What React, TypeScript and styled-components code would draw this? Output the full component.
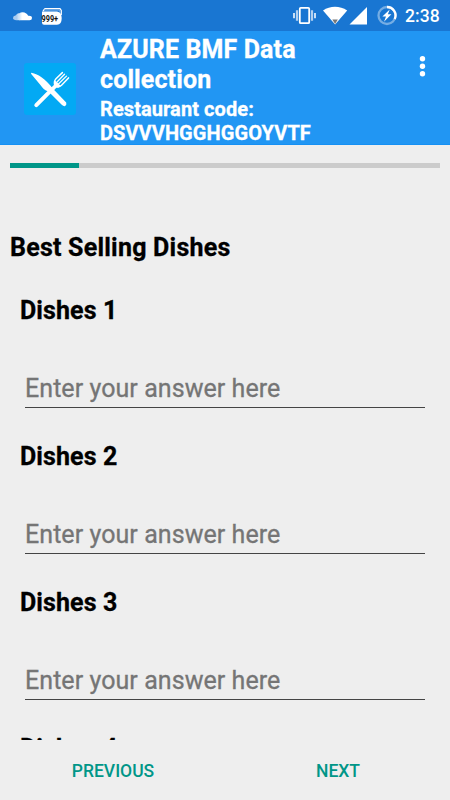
import React from "react";
import styled, { createGlobalStyle } from "styled-components";

const GlobalStyle = createGlobalStyle`
  * { box-sizing: border-box; }
  body { margin: 0; background: #eeeeee; font-family: Roboto, "Noto Sans", sans-serif; }
`;

const Screen = styled.div`
  width: 450px;
  height: 800px;
  display: flex;
  flex-direction: column;
  overflow: hidden;
  background: #eeeeee;
  color: #000;
`;

const StatusBar = styled.div`
  flex: none;
  height: 31px;
  display: flex;
  justify-content: space-between;
  background: #1976d2;
  color: #fff;
`;

const StatusGroup = styled.div`
  display: flex;
  align-items: flex-start;
`;

const Clock = styled.time`
  width: 45px;
  padding-top: 1px;
  font-size: 17.5px;
  font-weight: 500;
  line-height: 31px;
  letter-spacing: 0.1px;
`;

const AppBar = styled.header`
  flex: none;
  height: 114px;
  display: flex;
  align-items: flex-start;
  background: #2196f3;
  color: #fff;
  border-bottom: 1px solid #1590f4;
`;

const Logo = styled.svg`
  flex: none;
  margin: 32px 24px 0 24px;
`;

const Titles = styled.div`
  flex: 1;
  padding-top: 4px;
`;

const Title = styled.h1`
  width: 240px;
  margin: 0;
  font-size: 25px;
  line-height: 29.5px;
  font-weight: 700;
  letter-spacing: 0.12px;
  -webkit-text-stroke: 0.3px currentColor;
`;

const Subtitle = styled.p`
  width: 240px;
  margin: 4px 0 0;
  font-size: 20px;
  line-height: 23.5px;
  font-weight: 700;
  letter-spacing: 0.08px;
  -webkit-text-stroke: 0.3px currentColor;
`;

const MenuButton = styled.button`
  border: 0;
  padding: 0;
  margin: 23px 20px 0 0;
  width: 16px;
  height: 24px;
  background: none;
  color: #fff;
`;

const Content = styled.main`
  flex: 1;
  min-height: 0;
  overflow: hidden;
  padding-top: 18px;
`;

const Track = styled.div`
  height: 5px;
  margin: 0 10px;
  background: #cbcbcb;
`;

const Progress = styled.div<{ $percent: number }>`
  width: ${(p) => p.$percent}%;
  height: 100%;
  background: #009688;
`;

const SectionTitle = styled.h2`
  margin: 65px 10px 0;
  font-size: 25px;
  line-height: 30px;
  font-weight: 700;
  letter-spacing: 0.22px;
  -webkit-text-stroke: 0.3px currentColor;
`;

const Question = styled.label`
  display: block;
  height: 146px;
  padding: 0 25px 0 20px;
`;

const Questions = styled.div`
  padding-top: 33px;
`;

const QuestionLabel = styled.span`
  display: block;
  font-size: 25px;
  line-height: 30px;
  font-weight: 700;
  letter-spacing: 0.1px;
  -webkit-text-stroke: 0.3px currentColor;
`;

const Answer = styled.input`
  display: block;
  width: 400px;
  height: 39px;
  margin: 43px 0 0 5px;
  padding: 1px 0 0;
  border: 0;
  border-bottom: 1px solid #444;
  border-radius: 0;
  outline: 0;
  background: transparent;
  font: 400 25px Roboto, sans-serif;
  letter-spacing: 0.06px;
  &::placeholder {
    color: #757575;
    opacity: 1;
    -webkit-text-stroke: 0.3px #757575;
  }
`;

const Footer = styled.nav`
  flex: none;
  height: 60px;
  display: grid;
  grid-template-columns: 1fr 1fr;
`;

const FooterButton = styled.button`
  border: 0;
  padding: 2px 0 0 1px;
  background: none;
  color: #009688;
  font: 500 17.5px Roboto, sans-serif;
`;

const questions = ["Dishes 1", "Dishes 2", "Dishes 3", "Dishes 4"];

function Notifications() {
  return (
    <svg width="70" height="31" viewBox="0 0 70 31" aria-hidden="true">
      <path d="M19 13.5Q22 11.6 24.5 12.6Q27.6 13.8 28.2 15.8Q32 15.5 32 18Q32 20.2 29.5 20.2H19Z" fill="#fff" />
      <path d="M19.5 13V20.2H16.5Q13 20 13 18Q13 16 15.5 15.6Q16.5 13.5 19.5 13Z" fill="#a9cbef" />
      <path d="M18.2 13.5V20M20.8 13V20" stroke="#d8e9fa" strokeWidth="1" />
      <path d="M43 11L45 8.7H60L61.3 10.5V15" fill="none" stroke="#fff" strokeWidth="1.2" />
      <path d="M44 10H60V14" fill="none" stroke="#80b2e7" />
      <path d="M42 11.6H57Q61.7 12.6 61.7 18Q61.7 24.8 57 24.8H44Q42 24.8 42 22.5Z" fill="#fff" />
      <text x="41.6" y="21.6" textLength="16.5" lengthAdjust="spacingAndGlyphs" fontFamily="Roboto, sans-serif" fontSize="8.5" fontWeight="700" fill="#111">999+</text>
    </svg>
  );
}

function Indicators() {
  return (
    <svg width="112" height="31" viewBox="293 0 112 31" aria-hidden="true">
      <rect x="299.8" y="7.8" width="9.4" height="15.4" rx="1" fill="none" stroke="#fff" strokeWidth="1.8" />
      <path d="M297 10.2V20.8M312 10.2V20.8" stroke="#b3d1f1" strokeWidth="2.2" />
      <path d="M294 13V18.3M315 13V18.3" stroke="#dcebfa" strokeWidth="1.8" />
      <path d="M323 10.5Q328.5 6.8 335 6.8T347.2 10.5L335.1 24.6Z" fill="#fff" />
      <path d="M332.3 19.5H337.8L335.1 24Z" fill="#777" />
      <path d="M349.5 24.5H367V7Z" fill="#fff" />
      <circle cx="387" cy="15.5" r="8.5" fill="none" stroke="#75ade4" strokeWidth="2.3" />
      <path d="M387 7A8.5 8.5 0 0 1 394.7 19.1" fill="none" stroke="#fff" strokeWidth="2.3" />
      <path d="M389.7 9.5L382.4 16.5H386L384 21.8L391.4 14.3H387.9Z" fill="#fff" />
    </svg>
  );
}

function Cutlery() {
  return (
    <Logo width="52" height="52" viewBox="0 0 52 52" aria-hidden="true">
      <rect width="52" height="52" rx="3" fill="#03a9f4" />
      <path d="M12.3 42.2L28 26.3" stroke="#fff" strokeWidth="4" strokeLinecap="round" />
      <path d="M7.3 9.8C15 11.6 20.5 15.2 29 25.7L42.2 39.4Q43 41.5 41.2 43Q39.7 43.6 38 42L24.5 28.4C20.8 27.6 18.3 24.8 16 21.5L7 10.8Z" fill="#fff" />
      <path d="M28.2 25.6L31 22.7Q29.4 18.6 32 15.8L38.4 9.6M31 22.7Q34.6 25.2 37.5 22.3L44.5 14.9" fill="none" stroke="#fff" strokeWidth="1.5" strokeLinecap="round" />
      <path d="M31 17.4L37 23.1Q34.6 25 32.3 24.8L29.3 27.9L26.4 25.4L30.4 21.5Z" fill="#fff" />
      <path d="M33 19L40.5 11.3M34.7 20.7L42.5 13.1" stroke="#fff" strokeWidth="1.3" strokeLinecap="round" />
    </Logo>
  );
}

export default function App() {
  return (
    <Screen>
      <GlobalStyle />
      <StatusBar>
        <StatusGroup><Notifications /></StatusGroup>
        <StatusGroup><Indicators /><Clock>2:38</Clock></StatusGroup>
      </StatusBar>
      <AppBar>
        <Cutlery />
        <Titles>
          <Title>AZURE BMF Data collection</Title>
          <Subtitle>Restaurant code: DSVVVHGGHGGOYVTF</Subtitle>
        </Titles>
        <MenuButton aria-label="More options">
          <svg width="16" height="24" viewBox="0 0 16 24" fill="currentColor">
            <circle cx="8.5" cy="4.7" r="2.7" />
            <circle cx="8.5" cy="12.2" r="2.7" />
            <circle cx="8.5" cy="19.7" r="2.7" />
          </svg>
        </MenuButton>
      </AppBar>
      <Content>
        <Track><Progress $percent={16} /></Track>
        <SectionTitle>Best Selling Dishes</SectionTitle>
        <Questions>
          {questions.map((q) => (
            <Question key={q}>
              <QuestionLabel>{q}</QuestionLabel>
              <Answer placeholder="Enter your answer here" />
            </Question>
          ))}
        </Questions>
      </Content>
      <Footer>
        <FooterButton>PREVIOUS</FooterButton>
        <FooterButton>NEXT</FooterButton>
      </Footer>
    </Screen>
  );
}
